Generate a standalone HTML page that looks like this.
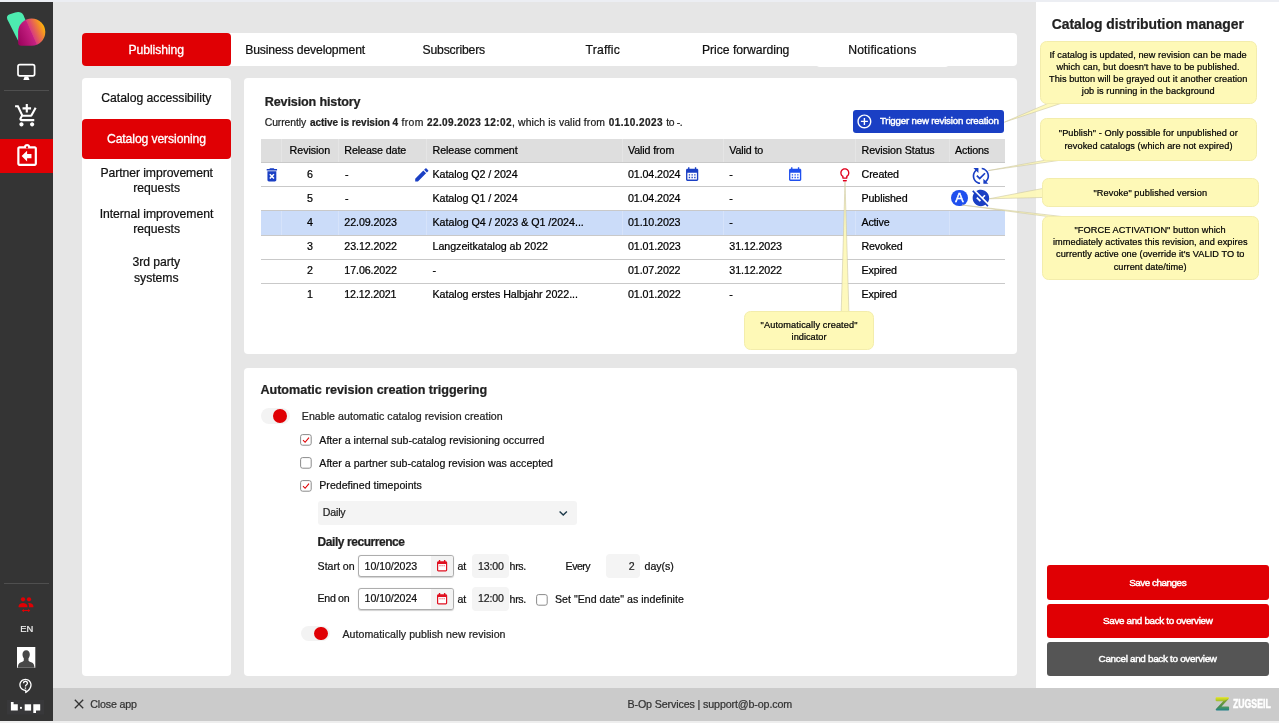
<!DOCTYPE html>
<html lang="en"><head><meta charset="utf-8"><title>Catalog distribution manager</title>
<style>
html,body{margin:0;padding:0}
body{width:1279px;height:723px;overflow:hidden;position:relative;background:#e6e6e6;font-family:'Liberation Sans', sans-serif;color:#111}
#app{position:absolute;left:0;top:0;width:1279px;height:723px;will-change:transform}
.b{position:absolute}
.i{position:absolute;display:block;overflow:visible}
.t{position:absolute;white-space:nowrap;line-height:16px;height:16px;-webkit-text-stroke:.22px currentColor}
b{font-weight:700}
</style></head><body>
<div id="app">
<div class="b" style="left:0;top:0;width:1279px;height:2px;background:#eceef3"></div>
<div class="b" style="left:0;top:720.5px;width:1279px;height:3px;background:#eeeeee"></div>
<div class="b" style="left:53px;top:688px;width:1226px;height:32.5px;background:#cbcbcb"></div>
<div class="b" id="sidebar" style="left:0;top:2px;width:53px;height:718.5px;background:#343434"></div>
<svg class="i" style="left:0;top:0" width="53" height="52" viewBox="0 0 53 52">
<defs><linearGradient id="lg" x1="-1.800" y1=".8" x2="27.050" y2="-11.990" gradientUnits="userSpaceOnUse">
<stop offset="0" stop-color="#98005a"/><stop offset=".545" stop-color="#c62182"/><stop offset=".565" stop-color="#d93d7c"/><stop offset=".8" stop-color="#ee7a3c"/><stop offset="1" stop-color="#fdb409"/></linearGradient></defs>
<path d="M7.4 19.6 C6.2 17 7.3 15.200 9.800 14.300 L15.200 12.400 C18.700 11.200 22 12.100 23.400 15 L32 36 L18.500 41.500 Z" fill="#4debb0"/>
<path d="M18.1 32.1 A13.6 13.6 0 1 1 31.7 45.7 L21.1 45.7 A3 3 0 0 1 18.1 42.7 Z" fill="url(#lg)"/>
</svg>
<svg class="i" style="left:16px;top:62px" width="21" height="20" viewBox="0 0 21 20">
<rect x="2" y="2.7" width="16.6" height="11.2" rx="1.8" fill="none" stroke="#fff" stroke-width="1.7"/>
<path d="M8.6 14.5h3.6l1.3 3.4H7.3z" fill="#fff"/></svg>
<div class="b" style="left:4px;top:90px;width:45px;height:1px;background:#4f4f4f"></div>
<svg class="i" style="left:13.9px;top:103.2px" width="25.6" height="25.6" viewBox="0 0 24 24"><path fill="#fff" d="M11 9h2V6h3V4h-3V1h-2v3H8v2h3v3zm-4 9c-1.1 0-1.99.9-1.99 2S5.900 22 7 22s2-.9 2-2-.9-2-2-2zm10 0c-1.1 0-1.99.9-1.99 2s.89 2 1.99 2 2-.9 2-2-.9-2-2-2zm-9.830-3.250l.03-.12.9-1.630h7.450c.75 0 1.410-.41 1.750-1.030l3.860-7.010L19.420 4h-.01l-1.100 2-2.760 5H8.530l-.13-.27L6.160 6l-.95-2-.94-2H1v2h2l3.600 7.590-1.350 2.450c-.16.28-.25.61-.25.96 0 1.100.9 2 2 2h12v-2H7.420c-.13 0-.25-.11-.25-.25z"/></svg>
<div class="b" style="left:0;top:139px;width:53px;height:34px;background:#e00004"></div>
<svg class="i" style="left:13.9px;top:143.2px" width="26.2" height="26.2" viewBox="0 0 24 24"><path fill="#fff" d="M16 10h-4V7l-5 5 5 5v-3h4zm3-7h-4.180C14.400 1.840 13.300 1 12 1s-2.400.84-2.820 2H5c-1.100 0-2 .9-2 2v14c0 1.100.9 2 2 2h14c1.100 0 2-.9 2-2V5c0-1.100-.9-2-2-2zm-7 0c.55 0 1 .45 1 1s-.45 1-1 1-1-.45-1-1 .45-1 1-1zm7 16H5V5h14v14z"/></svg>
<div class="b" style="left:4px;top:583px;width:45px;height:1px;background:#4f4f4f"></div>
<svg class="i" style="left:16px;top:594px" width="20" height="20" viewBox="0 0 20 20">
<g fill="#e00004"><circle cx="7" cy="5.3" r="2.1"/><circle cx="13" cy="5.3" r="2.1"/>
<path d="M2.6 13.2v-1.200c0-2 2.6-3 4.4-3s4.400 1 4.400 3v1.200z"/>
<path d="M12.1 9.100c.3-.1.600-.1.900-.1 1.800 0 4.400 1 4.400 3v1.200h-4.400v-1.200c0-1.200-.400-2.200-.9-2.900z"/>
<path d="M5.700 16.600l2.200-1.700v1.200h4.200v-1.200l2.200 1.700-2.200 1.700v-1.200H7.900v1.200z"/></g></svg>
<span class="t" style="left:20.2px;top:621px;font-size:9.4px;letter-spacing:-0.031px;color:#f0f0f0;">EN</span>
<svg class="i" style="left:16.900px;top:646.700px" width="18.300" height="20.800" viewBox="0 0 18.300 20.800">
<rect width="18.300" height="20.800" fill="#fff"/>
<path fill="#474747" d="M9.200 3.200c2.300 0 3.600 1.700 3.600 4.100 0 1.600-.5 3.100-1.300 4v1.900c0 .9 1.400 1.700 3.300 2.400 1.300.5 2.400 1.500 2.700 5.200H.8c.3-3.700 1.400-4.700 2.700-5.200 1.900-.7 3.300-1.500 3.300-2.400v-1.900c-.8-.9-1.300-2.400-1.300-4 0-2.400 1.400-4.100 3.700-4.100z"/></svg>
<svg class="i" style="left:18.0px;top:678.3px" width="15.6" height="15.6" viewBox="0 0 24 24"><path fill="#fff" d="M11 23.590v-3.600c-5.010-.26-9-4.420-9-9.490C2 5.260 6.260 1 11.500 1S21 5.260 21 10.500c0 4.950-3.440 9.930-8.570 12.400l-1.430.69zM11.500 3C7.360 3 4 6.360 4 10.500S7.360 18 11.500 18H13v2.300c3.640-2.300 6-6.080 6-9.800C19 6.360 15.640 3 11.500 3zm-1 11.500h2v2h-2zm2-1.500h-2c0-3.250 3-3 3-5 0-1.100-.9-2-2-2s-2 .9-2 2h-2c0-2.210 1.790-4 4-4s4 1.790 4 4c0 2.500-3 2.750-3 5z"/></svg>
<svg class="i" style="left:7px;top:700px" width="38" height="15" viewBox="0 0 38 15">
<rect width="37.200" height="14.600" fill="#38383a"/>
<g fill="#fff"><path d="M3.900 2h2.700v2.300h4.200v6.300H3.900z"/><rect x="13" y="6.900" width="1.900" height="1.900"/>
<rect x="17.700" y="4.300" width="6.400" height="6.300"/><path d="M26.300 4.300h6.900v6.300h-4.200v2.300h-2.700z"/></g></svg>
<div class="b" style="left:82px;top:33px;width:935px;height:32.800px;background:#fff;border-radius:4px"></div>
<div class="b" style="left:816px;top:33px;width:133px;height:34px;background:#fff;border-radius:4px"></div>
<div class="b" style="left:82px;top:33px;width:149px;height:33.200px;background:#e00004;border-radius:4px"></div>
<span class="t" style="left:128.5px;top:42px;font-size:12.2px;-webkit-text-stroke:0.3px currentColor;letter-spacing:-0.083px;color:#fff;">Publishing</span>
<span class="t" style="left:245.2px;top:42px;font-size:12.2px;letter-spacing:-0.138px;">Business development</span>
<span class="t" style="left:422.5px;top:42px;font-size:12.2px;letter-spacing:-0.166px;">Subscribers</span>
<span class="t" style="left:585.5px;top:42px;font-size:12.2px;letter-spacing:0.185px;">Traffic</span>
<span class="t" style="left:702px;top:42px;font-size:12.2px;letter-spacing:-0.044px;">Price forwarding</span>
<span class="t" style="left:848.2px;top:42px;font-size:12.2px;letter-spacing:0.151px;">Notifications</span>
<div class="b" style="left:82px;top:78px;width:149px;height:598px;background:#fff;border-radius:4px"></div>
<div class="b" style="left:82px;top:118.600px;width:149px;height:40px;background:#e00004;border-radius:4px"></div>
<span class="t" style="left:101.3px;top:90px;font-size:12.2px;letter-spacing:-0.016px;">Catalog accessibility</span>
<span class="t" style="left:107px;top:131px;font-size:12.2px;-webkit-text-stroke:0.3px currentColor;letter-spacing:-0.115px;color:#fff;">Catalog versioning</span>
<span class="t" style="left:100.4px;top:165px;font-size:12.2px;letter-spacing:-0.066px;">Partner improvement</span>
<span class="t" style="left:133.2px;top:180px;font-size:12.2px;letter-spacing:0.007px;">requests</span>
<span class="t" style="left:99.7px;top:206px;font-size:12.2px;letter-spacing:-0.047px;">Internal improvement</span>
<span class="t" style="left:133.2px;top:221px;font-size:12.2px;letter-spacing:0.007px;">requests</span>
<span class="t" style="left:132.6px;top:254px;font-size:12.2px;letter-spacing:-0.064px;">3rd party</span>
<span class="t" style="left:134.0px;top:270px;font-size:12.2px;letter-spacing:-0.017px;">systems</span>
<div class="b" style="left:244px;top:78px;width:773px;height:276.400px;background:#fff;border-radius:4px"></div>
<span class="t" style="left:264.8px;top:94px;font-size:12.6px;letter-spacing:-0.152px;font-weight:700;color:#222;">Revision history</span>
<span class="t" style="left:264.8px;top:115px;font-size:10.4px;letter-spacing:-0.107px;color:#222;">Currently</span>
<span class="t" style="left:309.9px;top:115px;font-size:10.0px;letter-spacing:-0.04px;font-weight:700;color:#222;">active is revision 4</span>
<span class="t" style="left:401.6px;top:115px;font-size:10.4px;letter-spacing:0.334px;color:#222;">from</span>
<span class="t" style="left:427.0px;top:115px;font-size:10.0px;letter-spacing:0.406px;font-weight:700;color:#222;">22.09.2023 12:02</span>
<span class="t" style="left:512.0px;top:115px;font-size:10.4px;letter-spacing:0.117px;color:#222;">, which is valid from</span>
<span class="t" style="left:608.7px;top:115px;font-size:10.0px;letter-spacing:0.426px;font-weight:700;color:#222;">01.10.2023</span>
<span class="t" style="left:666.3px;top:115px;font-size:10.4px;letter-spacing:-0.377px;color:#222;">to -.</span>
<div class="b" style="left:852.500px;top:109.500px;width:151.700px;height:23px;background:#1a3fc4;border-radius:3px"></div>
<svg class="i" style="left:855.6px;top:112.6px" width="16.8" height="16.8" viewBox="0 0 24 24"><path fill="#fff" d="M13 7h-2v4H7v2h4v4h2v-4h4v-2h-4V7zm-1-5C6.48 2 2 6.48 2 12s4.48 10 10 10 10-4.48 10-10S17.52 2 12 2zm0 18c-4.41 0-8-3.59-8-8s3.59-8 8-8 8 3.59 8 8-3.59 8-8 8z"/></svg>
<span class="t" style="left:880px;top:113px;font-size:9.7px;-webkit-text-stroke:0.45px currentColor;letter-spacing:-0.187px;color:#fff;">Trigger new revision creation</span>
<div class="b" style="left:260.6px;top:139px;width:744.0px;height:23.500px;background:#dedede"></div>
<div class="b" style="left:280.8px;top:139px;width:1px;height:23.500px;background:#e5e5e5"></div>
<div class="b" style="left:337.8px;top:139px;width:1px;height:23.500px;background:#e5e5e5"></div>
<div class="b" style="left:425.8px;top:139px;width:1px;height:23.500px;background:#e5e5e5"></div>
<div class="b" style="left:622.0px;top:139px;width:1px;height:23.500px;background:#e5e5e5"></div>
<div class="b" style="left:722.8px;top:139px;width:1px;height:23.500px;background:#e5e5e5"></div>
<div class="b" style="left:854.8px;top:139px;width:1px;height:23.500px;background:#e5e5e5"></div>
<div class="b" style="left:948.5px;top:139px;width:1px;height:23.500px;background:#e5e5e5"></div>
<div class="b" style="left:260.6px;top:210.600px;width:744.0px;height:24.300px;background:#cbdcf9"></div>
<div class="b" style="left:280.8px;top:210.600px;width:1px;height:24.300px;background:#d6e3fa"></div>
<div class="b" style="left:337.8px;top:210.600px;width:1px;height:24.300px;background:#d6e3fa"></div>
<div class="b" style="left:425.8px;top:210.600px;width:1px;height:24.300px;background:#d6e3fa"></div>
<div class="b" style="left:622.0px;top:210.600px;width:1px;height:24.300px;background:#d6e3fa"></div>
<div class="b" style="left:722.8px;top:210.600px;width:1px;height:24.300px;background:#d6e3fa"></div>
<div class="b" style="left:854.8px;top:210.600px;width:1px;height:24.300px;background:#d6e3fa"></div>
<div class="b" style="left:948.5px;top:210.600px;width:1px;height:24.300px;background:#d6e3fa"></div>
<div class="b" style="left:260.6px;top:162.0px;width:744.0px;height:1px;background:#c9c9c9"></div>
<div class="b" style="left:260.6px;top:186.1px;width:744.0px;height:1px;background:#c9c9c9"></div>
<div class="b" style="left:260.6px;top:209.9px;width:744.0px;height:1px;background:#c9c9c9"></div>
<div class="b" style="left:260.6px;top:234.5px;width:744.0px;height:1px;background:#c9c9c9"></div>
<div class="b" style="left:260.6px;top:258.7px;width:744.0px;height:1px;background:#c9c9c9"></div>
<div class="b" style="left:260.6px;top:282.7px;width:744.0px;height:1px;background:#c9c9c9"></div>
<span class="t" style="left:289.6px;top:142px;font-size:10.7px;letter-spacing:-0.057px;color:#000;">Revision</span>
<span class="t" style="left:344.3px;top:142px;font-size:10.7px;letter-spacing:-0.089px;color:#000;">Release date</span>
<span class="t" style="left:432.5px;top:142px;font-size:10.7px;letter-spacing:-0.067px;color:#000;">Release comment</span>
<span class="t" style="left:628px;top:142px;font-size:10.7px;letter-spacing:-0.114px;color:#000;">Valid from</span>
<span class="t" style="left:729.3px;top:142px;font-size:10.7px;letter-spacing:-0.123px;color:#000;">Valid to</span>
<span class="t" style="left:861.5px;top:142px;font-size:10.7px;letter-spacing:-0.083px;color:#000;">Revision Status</span>
<span class="t" style="left:955px;top:142px;font-size:10.7px;letter-spacing:-0.144px;color:#000;">Actions</span>
<span class="t" style="left:306.9px;top:166px;font-size:10.7px;color:#000;">6</span>
<span class="t" style="left:345px;top:166px;font-size:10.7px;color:#000;">-</span>
<span class="t" style="left:432.5px;top:166px;font-size:10.7px;letter-spacing:-0.067px;color:#000;">Katalog Q2 / 2024</span>
<span class="t" style="left:628px;top:166px;font-size:10.7px;letter-spacing:-0.111px;color:#000;">01.04.2024</span>
<span class="t" style="left:729.3px;top:166px;font-size:10.7px;color:#000;">-</span>
<span class="t" style="left:861.5px;top:166px;font-size:10.7px;letter-spacing:-0.089px;color:#000;">Created</span>
<span class="t" style="left:306.9px;top:190px;font-size:10.7px;color:#000;">5</span>
<span class="t" style="left:345px;top:190px;font-size:10.7px;color:#000;">-</span>
<span class="t" style="left:432.5px;top:190px;font-size:10.7px;letter-spacing:-0.067px;color:#000;">Katalog Q1 / 2024</span>
<span class="t" style="left:628px;top:190px;font-size:10.7px;letter-spacing:-0.111px;color:#000;">01.04.2024</span>
<span class="t" style="left:729.3px;top:190px;font-size:10.7px;color:#000;">-</span>
<span class="t" style="left:861.5px;top:190px;font-size:10.7px;letter-spacing:-0.107px;color:#000;">Published</span>
<span class="t" style="left:306.9px;top:214px;font-size:10.7px;color:#000;">4</span>
<span class="t" style="left:344.3px;top:214px;font-size:10.7px;letter-spacing:-0.089px;color:#000;">22.09.2023</span>
<span class="t" style="left:432.5px;top:214px;font-size:10.7px;letter-spacing:-0.027px;color:#000;">Katalog Q4 / 2023 &amp; Q1 /2024...</span>
<span class="t" style="left:628px;top:214px;font-size:10.7px;letter-spacing:-0.111px;color:#000;">01.10.2023</span>
<span class="t" style="left:729.3px;top:214px;font-size:10.7px;color:#000;">-</span>
<span class="t" style="left:861.5px;top:214px;font-size:10.7px;letter-spacing:-0.202px;color:#000;">Active</span>
<span class="t" style="left:306.9px;top:238px;font-size:10.7px;color:#000;">3</span>
<span class="t" style="left:344.3px;top:238px;font-size:10.7px;letter-spacing:-0.089px;color:#000;">23.12.2022</span>
<span class="t" style="left:432.5px;top:238px;font-size:10.7px;letter-spacing:-0.045px;color:#000;">Langzeitkatalog ab 2022</span>
<span class="t" style="left:628px;top:238px;font-size:10.7px;letter-spacing:-0.078px;color:#000;">01.01.2023</span>
<span class="t" style="left:729.3px;top:238px;font-size:10.7px;letter-spacing:-0.089px;color:#000;">31.12.2023</span>
<span class="t" style="left:861.5px;top:238px;font-size:10.7px;letter-spacing:-0.148px;color:#000;">Revoked</span>
<span class="t" style="left:306.9px;top:262px;font-size:10.7px;color:#000;">2</span>
<span class="t" style="left:344.3px;top:262px;font-size:10.7px;letter-spacing:-0.089px;color:#000;">17.06.2022</span>
<span class="t" style="left:432.5px;top:262px;font-size:10.7px;color:#000;">-</span>
<span class="t" style="left:628px;top:262px;font-size:10.7px;letter-spacing:-0.111px;color:#000;">01.07.2022</span>
<span class="t" style="left:729.3px;top:262px;font-size:10.7px;letter-spacing:-0.089px;color:#000;">31.12.2022</span>
<span class="t" style="left:861.5px;top:262px;font-size:10.7px;letter-spacing:-0.125px;color:#000;">Expired</span>
<span class="t" style="left:306.9px;top:286px;font-size:10.7px;color:#000;">1</span>
<span class="t" style="left:344.3px;top:286px;font-size:10.7px;letter-spacing:-0.144px;color:#000;">12.12.2021</span>
<span class="t" style="left:432.5px;top:286px;font-size:10.7px;letter-spacing:-0.042px;color:#000;">Katalog erstes Halbjahr 2022...</span>
<span class="t" style="left:628px;top:286px;font-size:10.7px;letter-spacing:-0.078px;color:#000;">01.01.2022</span>
<span class="t" style="left:729.3px;top:286px;font-size:10.7px;color:#000;">-</span>
<span class="t" style="left:861.5px;top:286px;font-size:10.7px;letter-spacing:-0.125px;color:#000;">Expired</span>
<svg class="i" style="left:263.4px;top:165.7px" width="17.75" height="17.75" viewBox="0 0 24 24"><path fill="#1a3fc4" d="M6 19c0 1.1.9 2 2 2h8c1.1 0 2-.9 2-2V7H6v12zm2.46-7.12l1.41-1.41L12 12.59l2.12-2.12 1.41 1.41L13.41 14l2.12 2.12-1.41 1.41L12 15.41l-2.12 2.12-1.41-1.41L10.59 14l-2.13-2.12zM15.5 4l-1-1h-5l-1 1H5v2h14V4z"/></svg>
<svg class="i" style="left:412.8px;top:166.0px" width="17.6" height="17.6" viewBox="0 0 24 24"><path fill="#1a3fc4" d="M3 17.25V21h3.75L17.81 9.94l-3.75-3.75L3 17.25zM20.71 7.04c.39-.39.39-1.02 0-1.41l-2.34-2.34c-.39-.39-1.02-.39-1.41 0l-1.83 1.83 3.75 3.75 1.83-1.83z"/></svg>
<svg class="i" style="left:684.1px;top:165.7px" width="16.3" height="16.3" viewBox="0 0 24 24"><path fill="#1a3fc4" d="M19 4h-1V2h-2v2H8V2H6v2H5c-1.11 0-1.99.9-1.99 2L3 20c0 1.1.89 2 2 2h14c1.1 0 2-.9 2-2V6c0-1.1-.9-2-2-2zm0 16H5V10h14v10zM9 14H7v-2h2v2zm4 0h-2v-2h2v2zm4 0h-2v-2h2v2zm-8 4H7v-2h2v2zm4 0h-2v-2h2v2zm4 0h-2v-2h2v2z"/></svg>
<svg class="i" style="left:787.3px;top:165.7px" width="16.3" height="16.3" viewBox="0 0 24 24"><path fill="#1f4fee" d="M19 4h-1V2h-2v2H8V2H6v2H5c-1.11 0-1.99.9-1.99 2L3 20c0 1.1.89 2 2 2h14c1.1 0 2-.9 2-2V6c0-1.1-.9-2-2-2zm0 16H5V10h14v10zM9 14H7v-2h2v2zm4 0h-2v-2h2v2zm4 0h-2v-2h2v2zm-8 4H7v-2h2v2zm4 0h-2v-2h2v2zm4 0h-2v-2h2v2z"/></svg>
<svg class="i" style="left:836.8px;top:166.7px" width="15.7" height="15.7" viewBox="0 0 24 24"><path fill="#e0001c" d="M9 21c0 .55.45 1 1 1h4c.55 0 1-.45 1-1v-1H9v1zm3-19C8.14 2 5 5.14 5 9c0 2.38 1.19 4.47 3 5.74V17c0 .55.45 1 1 1h6c.55 0 1-.45 1-1v-2.26c1.81-1.27 3-3.36 3-5.74 0-3.86-3.14-7-7-7zm2.85 11.1l-.85.6V16h-4v-2.3l-.85-.6C7.8 12.16 7 10.63 7 9c0-2.76 2.24-5 5-5s5 2.24 5 5c0 1.63-.8 3.16-2.15 4.1z"/></svg>
<svg class="i" style="left:971.3px;top:165.6px" width="19.8" height="19.8" viewBox="0 0 24 24"><path fill="#1a3fc4" d="M17.66 9.53l-7.07 7.07-4.24-4.24 1.41-1.41 2.83 2.83 5.66-5.66 1.41 1.41zM4 12c0-2.33 1.02-4.42 2.62-5.88L9 8.5v-6H3l2.2 2.2C3.24 6.52 2 9.11 2 12c0 5.19 3.95 9.45 9 9.95v-2.02c-3.94-.49-7-3.86-7-7.93zm18 0c0-5.19-3.95-9.45-9-9.95v2.02c3.94.49 7 3.86 7 7.93 0 2.33-1.02 4.42-2.62 5.88L15 15.5v6h6l-2.2-2.2c1.96-1.82 3.2-4.41 3.2-7.3z"/></svg>
<div class="b" style="left:951.400px;top:189.800px;width:16.200px;height:16.200px;border-radius:50%;background:#1f4fee"></div>
<span class="t" style="left:955.2px;top:190px;font-size:12.5px;-webkit-text-stroke:0.5px currentColor;color:#fff;">A</span>
<svg class="i" style="left:971.0px;top:188.1px" width="19.8" height="19.8" viewBox="0 0 24 24"><path fill="#1a3fc4" d="M21.19 21.19L2.81 2.81 1.39 4.22l2.27 2.27C2.61 8.07 2 9.96 2 12c0 5.52 4.48 10 10 10 2.04 0 3.93-.61 5.51-1.66l2.27 2.27 1.41-1.42zm-10.6-4.59l-4.24-4.24 1.41-1.41 2.83 2.83.18-.18 1.41 1.41-1.59 1.59zm3-5.84l-7.1-7.1C8.07 2.61 9.96 2 12 2c5.52 0 10 4.48 10 10 0 2.04-.61 3.93-1.66 5.51L15 12.17l2.65-2.65-1.41-1.41-2.65 2.65z"/></svg>
<div class="b" style="left:244px;top:368.200px;width:773px;height:307.800px;background:#fff;border-radius:4px"></div>
<span class="t" style="left:260.5px;top:382px;font-size:12.6px;letter-spacing:-0.039px;font-weight:700;color:#222;">Automatic revision creation triggering</span>
<div class="b" style="left:260.5px;top:408.0px;width:29px;height:15.500px;border-radius:8px;background:#f3f3f3"></div><div class="b" style="left:273.4px;top:408.9px;width:13.800px;height:13.800px;border-radius:50%;background:#e00004"></div>
<span class="t" style="left:301.8px;top:408px;font-size:10.6px;letter-spacing:0.043px;color:#222;">Enable automatic catalog revision creation</span>
<svg class="i" style="left:300.0px;top:434.3px" width="12" height="12" viewBox="0 0 12 12"><rect x=".6" y=".6" width="10.600" height="10.600" rx="2" fill="#fff" stroke="#8a8a8a" stroke-width="1"/><path d="M3 6.200l2.100 2.100 3.900-4.700" fill="none" stroke="#e00004" stroke-width="1.100"/></svg>
<span class="t" style="left:319.3px;top:432px;font-size:10.6px;letter-spacing:0.013px;">After a internal sub-catalog revisioning occurred</span>
<svg class="i" style="left:300.0px;top:457.4px" width="12" height="12" viewBox="0 0 12 12"><rect x=".6" y=".6" width="10.600" height="10.600" rx="2" fill="#fff" stroke="#8a8a8a" stroke-width="1"/></svg>
<span class="t" style="left:319.3px;top:455px;font-size:10.6px;letter-spacing:0.023px;">After a partner sub-catalog revision was accepted</span>
<svg class="i" style="left:300.0px;top:480.0px" width="12" height="12" viewBox="0 0 12 12"><rect x=".6" y=".6" width="10.600" height="10.600" rx="2" fill="#fff" stroke="#8a8a8a" stroke-width="1"/><path d="M3 6.200l2.100 2.100 3.900-4.700" fill="none" stroke="#e00004" stroke-width="1.100"/></svg>
<span class="t" style="left:319.3px;top:477px;font-size:10.6px;">Predefined timepoints</span>
<div class="b" style="left:317.500px;top:500.500px;width:259.700px;height:24px;background:#f4f4f4;border-radius:3px"></div>
<span class="t" style="left:322.8px;top:504px;font-size:10.6px;letter-spacing:-0.187px;color:#222;">Daily</span>
<svg class="i" style="left:554.7px;top:504.7px" width="16.5" height="16.5" viewBox="0 0 24 24"><path fill="#1d3a4a" d="M16.590 8.590L12 13.170 7.410 8.590 6 10l6 6 6-6z"/></svg>
<span class="t" style="left:317.6px;top:534px;font-size:12.0px;letter-spacing:-0.444px;font-weight:700;color:#222;">Daily recurrence</span>
<span class="t" style="left:317.6px;top:558px;font-size:10.6px;letter-spacing:-0.016px;">Start on</span>
<div class="b" style="left:358.2px;top:555.0px;width:95.6px;height:22.2px;box-sizing:border-box;border:1px solid #adadad;box-shadow:0 .5px 1px rgba(0,0,0,.18);border-radius:3px;background:#fff;overflow:hidden"><div style="position:absolute;right:0;top:0;width:22px;height:100%;background:#f3f3f3"></div></div>
<span class="t" style="left:364.6px;top:558px;font-size:10.6px;letter-spacing:-0.048px;">10/10/2023</span>
<svg class="i" style="left:436.9px;top:560.0px" width="10.200" height="11.500" viewBox="0 0 11 12" preserveAspectRatio="none"><path fill="#e01020" d="M2 0h1.500v1.200h4V0H9v1.200h.5c.800 0 1.500.7 1.500 1.500v7.800c0 .8-.7 1.500-1.500 1.500h-8C.7 12 0 11.300 0 10.500V2.700c0-.8.7-1.500 1.500-1.500H2z"/><rect x="1.300" y="4.200" width="8.400" height="6.500" fill="#fff"/><path fill="#e01020" d="M2.600 5.400h1.300v1.100H2.600zm2.250 0h1.300v1.100h-1.300zm2.250 0h1.300v1.100H7.100z" opacity=".75"/></svg>
<span class="t" style="left:457.6px;top:558px;font-size:10.6px;letter-spacing:-0.144px;">at</span>
<div class="b" style="left:472px;top:554.200px;width:37.300px;height:24.200px;background:#f4f4f4;border-radius:4px"></div>
<span class="t" style="left:478.0px;top:558px;font-size:10.6px;letter-spacing:-0.129px;color:#222;">13:00</span>
<span class="t" style="left:509.6px;top:558px;font-size:10.6px;letter-spacing:-0.324px;">hrs.</span>
<span class="t" style="left:565.6px;top:558px;font-size:10.6px;letter-spacing:-0.523px;">Every</span>
<div class="b" style="left:606.300px;top:554.200px;width:33.800px;height:24.200px;background:#f4f4f4;border-radius:4px"></div>
<span class="t" style="left:628.8px;top:558px;font-size:10.6px;color:#222;">2</span>
<span class="t" style="left:644.6px;top:558px;font-size:10.6px;letter-spacing:-0.048px;">day(s)</span>
<span class="t" style="left:317.6px;top:590px;font-size:10.6px;letter-spacing:-0.316px;">End on</span>
<div class="b" style="left:358.2px;top:588.0px;width:95.6px;height:21.8px;box-sizing:border-box;border:1px solid #adadad;box-shadow:0 .5px 1px rgba(0,0,0,.18);border-radius:3px;background:#fff;overflow:hidden"><div style="position:absolute;right:0;top:0;width:22px;height:100%;background:#f3f3f3"></div></div>
<span class="t" style="left:364.6px;top:590px;font-size:10.6px;letter-spacing:-0.048px;">10/10/2024</span>
<svg class="i" style="left:436.9px;top:592.9px" width="10.200" height="11.500" viewBox="0 0 11 12" preserveAspectRatio="none"><path fill="#e01020" d="M2 0h1.500v1.200h4V0H9v1.200h.5c.800 0 1.500.7 1.500 1.500v7.800c0 .8-.7 1.500-1.500 1.500h-8C.7 12 0 11.300 0 10.500V2.700c0-.8.7-1.500 1.500-1.500H2z"/><rect x="1.300" y="4.200" width="8.400" height="6.500" fill="#fff"/><path fill="#e01020" d="M2.600 5.400h1.300v1.100H2.600zm2.250 0h1.300v1.100h-1.300zm2.250 0h1.300v1.100H7.100z" opacity=".75"/></svg>
<span class="t" style="left:457.6px;top:591px;font-size:10.6px;letter-spacing:-0.144px;">at</span>
<div class="b" style="left:472px;top:587.0px;width:37.300px;height:24.300px;background:#f4f4f4;border-radius:4px"></div>
<span class="t" style="left:478.0px;top:590px;font-size:10.6px;letter-spacing:-0.129px;color:#222;">12:00</span>
<span class="t" style="left:509.6px;top:591px;font-size:10.6px;letter-spacing:-0.324px;">hrs.</span>
<svg class="i" style="left:536.0px;top:593.7px" width="12" height="12" viewBox="0 0 12 12"><rect x=".6" y=".6" width="10.600" height="10.600" rx="2" fill="#fff" stroke="#8a8a8a" stroke-width="1"/></svg>
<span class="t" style="left:555.0px;top:591px;font-size:10.6px;letter-spacing:0.02px;">Set "End date" as indefinite</span>
<div class="b" style="left:301.2px;top:625.8px;width:29px;height:15.500px;border-radius:8px;background:#f3f3f3"></div><div class="b" style="left:314.09999999999997px;top:626.6999999999999px;width:13.800px;height:13.800px;border-radius:50%;background:#e00004"></div>
<span class="t" style="left:342.5px;top:626px;font-size:10.6px;letter-spacing:0.05px;color:#222;">Automatically publish new revision</span>
<div class="b" style="left:1035.500px;top:2px;width:243.500px;height:685.500px;background:#fff"></div>
<span class="t" style="left:1051.8px;top:16px;font-size:13.9px;letter-spacing:-0.035px;font-weight:700;color:#222;">Catalog distribution manager</span>
<svg class="i" style="left:0;top:0" width="1279" height="723" viewBox="0 0 1279 723"><g fill="#fef9b7" fill-opacity=".92" stroke="#cdc8a4" stroke-width=".6" stroke-linejoin="round"><path d="M1049.14 102.91 L1004.3 122.2 L1062.49 102.91 Z"/><path d="M1047.34 159.79 L988.3 170.6 L1063.45 159.79 Z"/><path d="M1045.18 187.99 L989.0 198.8 L1045.18 197.42 Z"/><path d="M1051.04 216.98 L962.0 205.0 L1065.88 216.98 Z"/><path d="M841.12 314.19 L845.0 182.0 L848.98 314.19 Z"/></g></svg>
<div class="b" style="left:1039.6px;top:41.0px;width:217.0px;height:63.4px;background:#fef9b7;border:1px solid #f3edac;box-sizing:border-box;border-radius:6.500px"></div>
<div class="b" style="left:1039.6px;top:118.2px;width:217.4px;height:42.4px;background:#fef9b7;border:1px solid #f3edac;box-sizing:border-box;border-radius:6.500px"></div>
<div class="b" style="left:1041.7px;top:178.4px;width:217.2px;height:28.8px;background:#fef9b7;border:1px solid #f3edac;box-sizing:border-box;border-radius:6.500px"></div>
<div class="b" style="left:1041.7px;top:215.8px;width:217.2px;height:64.2px;background:#fef9b7;border:1px solid #f3edac;box-sizing:border-box;border-radius:6.500px"></div>
<div class="b" style="left:744.2px;top:311.1px;width:129.4px;height:38.8px;background:#fef9b7;border:1px solid #f3edac;box-sizing:border-box;border-radius:6.500px"></div>
<span class="t" style="left:1049.5px;top:47px;font-size:9.2px;letter-spacing:0.068px;color:#000;">If catalog is updated, new revision can be made</span>
<span class="t" style="left:1056.5px;top:59px;font-size:9.2px;letter-spacing:0.057px;color:#000;">which can, but doesn't have to be published.</span>
<span class="t" style="left:1049.0px;top:71px;font-size:9.2px;letter-spacing:0.057px;color:#000;">This button will be grayed out it another creation</span>
<span class="t" style="left:1081.8px;top:83px;font-size:9.2px;letter-spacing:0.079px;color:#000;">job is running in the background</span>
<span class="t" style="left:1058.8px;top:125px;font-size:9.2px;letter-spacing:0.068px;color:#000;">"Publish" - Only possible for unpublished or</span>
<span class="t" style="left:1064.5px;top:138px;font-size:9.2px;letter-spacing:0.065px;color:#000;">revoked catalogs (which are not expired)</span>
<span class="t" style="left:1093.5px;top:185px;font-size:9.2px;letter-spacing:0.071px;color:#000;">"Revoke" published version</span>
<span class="t" style="left:1074.5px;top:222px;font-size:9.2px;letter-spacing:0.082px;color:#000;">"FORCE ACTIVATION" button which</span>
<span class="t" style="left:1053.0px;top:234px;font-size:9.2px;letter-spacing:0.064px;color:#000;">immediately activates this revision, and expires</span>
<span class="t" style="left:1056.0px;top:246px;font-size:9.2px;letter-spacing:0.063px;color:#000;">currently active one (override it's VALID TO to</span>
<span class="t" style="left:1113.7px;top:259px;font-size:9.2px;letter-spacing:0.047px;color:#000;">current date/time)</span>
<span class="t" style="left:760.6px;top:317px;font-size:9.2px;letter-spacing:0.115px;color:#000;">"Automatically created"</span>
<span class="t" style="left:791.6px;top:329px;font-size:9.2px;letter-spacing:0.021px;color:#000;">indicator</span>
<div class="b" style="left:1046.600px;top:565.3px;width:222.800px;height:34.4px;background:#e00004;border-radius:3px"></div>
<div class="b" style="left:1046.600px;top:603.8px;width:222.800px;height:34.0px;background:#e00004;border-radius:3px"></div>
<div class="b" style="left:1046.600px;top:641.8px;width:222.800px;height:34.0px;background:#555555;border-radius:3px"></div>
<span class="t" style="left:1129.2px;top:575px;font-size:9.9px;-webkit-text-stroke:0.45px currentColor;letter-spacing:-0.472px;color:#fff;">Save changes</span>
<span class="t" style="left:1103.0px;top:613px;font-size:9.9px;-webkit-text-stroke:0.45px currentColor;letter-spacing:-0.343px;color:#fff;">Save and back to overview</span>
<span class="t" style="left:1098.6px;top:651px;font-size:9.9px;-webkit-text-stroke:0.45px currentColor;letter-spacing:-0.302px;color:#fff;">Cancel and back to overview</span>
<svg class="i" style="left:71.0px;top:696.2px" width="16.0" height="16.0" viewBox="0 0 24 24"><path fill="#333" d="M19 6.410L17.590 5 12 10.590 6.410 5 5 6.410 10.590 12 5 17.590 6.410 19 12 13.410 17.590 19 19 17.590 13.410 12z"/></svg>
<span class="t" style="left:90.3px;top:696px;font-size:10.7px;letter-spacing:-0.18px;color:#333;">Close app</span>
<span class="t" style="left:627.5px;top:696px;font-size:10.7px;letter-spacing:-0.128px;color:#333;">B-Op Services | support@b-op.com</span>
<svg class="i" style="left:1214px;top:696px" width="17" height="16" viewBox="0 0 17 16">
<defs><linearGradient id="zg" x1="0" y1="0" x2="0" y2="1"><stop offset="0" stop-color="#e6e619"/><stop offset=".35" stop-color="#8fb53a"/><stop offset=".7" stop-color="#4d9a5a"/><stop offset="1" stop-color="#1f7f8a"/></linearGradient></defs>
<path d="M2.600 1.300h11.500c.8 0 1.200.9.600 1.500L7.500 10.600h6.600c.7 0 1 .5 1 1.200v1.600c0 .7-.4 1.200-1 1.200H2.600c-.8 0-1.200-.9-.6-1.500L9.200 5.300H2.600c-.7 0-1-.5-1-1.200V2.500c0-.7.400-1.200 1-1.200z" fill="url(#zg)"/>
<path d="M9.200 5.300L14.700 2.800 7.500 10.600 2 13.100z" fill="#3d6b3a" opacity=".35"/></svg>
<span class="t" style="left:1233px;top:696.100px;font-size:13.600px;font-weight:700;color:#fff;-webkit-text-stroke:.5px #fff;transform-origin:0 50%;transform:scaleX(.64)">ZUGSEIL</span>
</div>
</body></html>
